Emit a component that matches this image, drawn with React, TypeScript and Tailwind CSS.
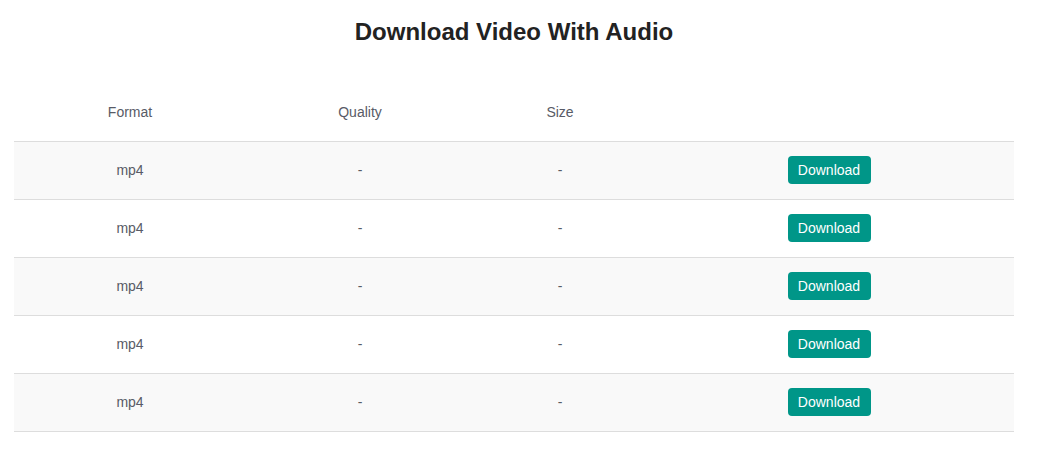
const rows = Array.from({ length: 5 }, () => ({ format: "mp4", quality: "-", size: "-" }));

export default function App() {
  return (
    <div className="bg-white min-h-[468px] font-['Liberation_Sans',Arial,sans-serif]">
      <div className="w-[1000px] ml-[14px]">
        <h2 className="pt-[18px] text-center text-[24px] leading-[28px] font-bold text-[#222]">
          Download Video With Audio
        </h2>
        <table className="w-full mt-[37px] border-collapse text-[14px] text-[#585b66]">
          <thead>
            <tr className="h-[58px] border-b border-[#ddd]">
              <th className="w-[232px] pt-[2px] font-normal">Format</th>
              <th className="w-[228px] pt-[2px] font-normal">Quality</th>
              <th className="w-[172px] pt-[2px] font-normal">Size</th>
              <th className="font-normal"></th>
            </tr>
          </thead>
          <tbody>
            {rows.map((row, i) => (
              <tr key={i} className={`h-[58px] border-b border-[#ddd] ${i % 2 === 0 ? "bg-[#f9f9f9]" : "bg-white"}`}>
                <td className="text-center">{row.format}</td>
                <td className="text-center">{row.quality}</td>
                <td className="text-center">{row.size}</td>
                <td className="text-center pr-[2px]">
                  <button className="h-[28px] w-[83px] rounded-[4px] bg-[#009688] text-white text-[14px]">
                    Download
                  </button>
                </td>
              </tr>
            ))}
          </tbody>
        </table>
      </div>
    </div>
  );
}
